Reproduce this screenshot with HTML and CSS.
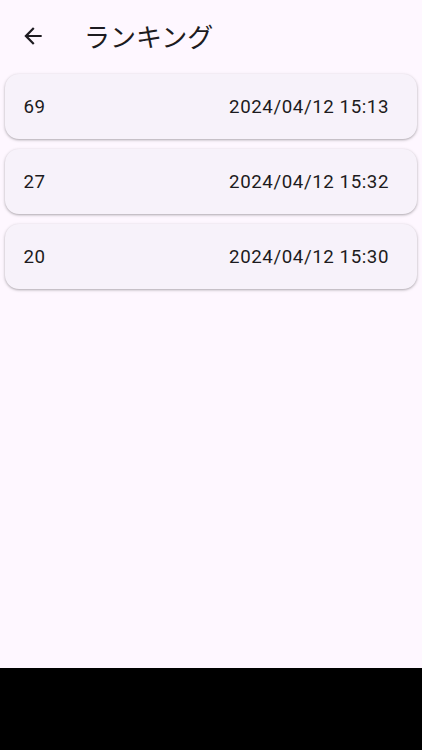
FILE: index.html
```html
<!DOCTYPE html>
<html lang="ja">
<head>
  <meta charset="UTF-8" />
  <meta name="viewport" content="width=device-width, initial-scale=1.0" />
  <title>ランキング</title>
  <link rel="stylesheet" href="styles.css">
</head>
<body>
  <div class="screen">

    <!-- APP BAR -->
    <div class="app-bar">
      <button class="back-btn" aria-label="戻る">
        <svg viewBox="0 0 24 24" width="26" height="26">
          <path d="M20 11H7.83l5.59-5.59L12 4l-8 8 8 8 1.41-1.41L7.83 13H20v-2z" fill="#1d1b20"/>
        </svg>
      </button>
      <h1 class="title">ランキング</h1>
    </div>

    <!-- LISTA -->
    <div class="list">
      <div class="card">
        <span class="score">69</span>
        <span class="date">2024/04/12 15:13</span>
      </div>
      <div class="card">
        <span class="score">27</span>
        <span class="date">2024/04/12 15:32</span>
      </div>
      <div class="card">
        <span class="score">20</span>
        <span class="date">2024/04/12 15:30</span>
      </div>
    </div>
  </div>

  <div class="nav-bar"></div>
</body>
</html>
```

FILE: styles.css
```css
body {
  margin: 0;
  padding: 0;
  height: 750px;
  display: flex;
  flex-direction: column;
  background-color: #fef7ff;
  font-family: Roboto, "Noto Sans", sans-serif;
  color: #1d1b20;
}

.screen {
  flex: 1;
  display: flex;
  flex-direction: column;
}

.app-bar {
  height: 69px;
  display: flex;
  align-items: center;
  padding-top: 2px;
  box-sizing: border-box;
}

.back-btn {
  width: 26px;
  height: 26px;
  margin-left: 20px;
  padding: 0;
  border: none;
  background: none;
  display: flex;
}

.title {
  margin: 0 0 0 38px;
  font-family: "Noto Sans CJK JP", "Noto Sans", sans-serif;
  font-size: 26px;
  font-weight: 400;
  line-height: 1;
}

.list {
  display: flex;
  flex-direction: column;
  padding: 0 5px;
}

.card {
  height: 65px;
  margin: 5px 0;
  padding: 0 28px 0 18.5px;
  display: flex;
  align-items: center;
  justify-content: space-between;
  background-color: #f7f2fa;
  border-radius: 14px;
  box-shadow: 0 1px 2px rgba(0,0,0,0.2), 0 1px 3px 1px rgba(0,0,0,0.1);
  font-size: 18.7px;
  letter-spacing: 0.58px;
}

.nav-bar {
  height: 82px;
  background-color: #000;
}
```
